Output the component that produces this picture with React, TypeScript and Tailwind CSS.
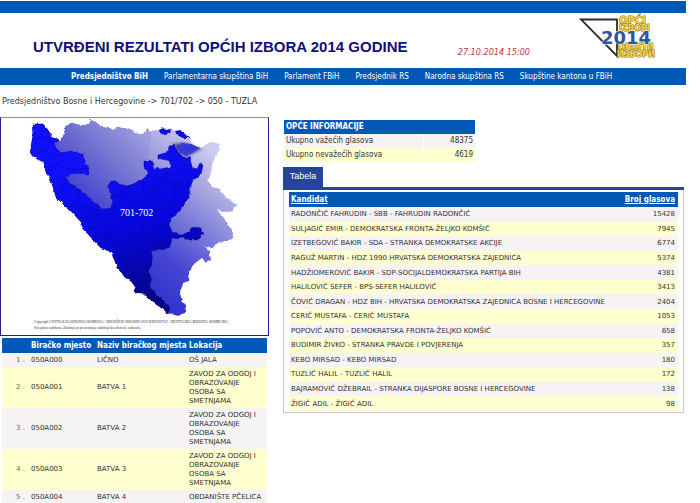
import React from "react";

const navItems = [
  "Predsjedništvo BiH",
  "Parlamentarna skupština BiH",
  "Parlament FBiH",
  "Predsjednik RS",
  "Narodna skupština RS",
  "Skupštine kantona u FBiH",
];

const candidates: [string, number][] = [
  ["RADONČIĆ FAHRUDIN - SBB - FAHRUDIN RADONČIĆ", 15428],
  ["SULJAGIĆ EMIR - DEMOKRATSKA FRONTA-ŽELJKO KOMŠIĆ", 7945],
  ["IZETBEGOVIĆ BAKIR - SDA - STRANKA DEMOKRATSKE AKCIJE", 6774],
  ["RAGUŽ MARTIN - HDZ 1990 HRVATSKA DEMOKRATSKA ZAJEDNICA", 5374],
  ["HADŽIOMEROVIĆ BAKIR - SDP-SOCIJALDEMOKRATSKA PARTIJA BIH", 4381],
  ["HALILOVIĆ SEFER - BPS-SEFER HALILOVIĆ", 3413],
  ["ČOVIĆ DRAGAN - HDZ BIH - HRVATSKA DEMOKRATSKA ZAJEDNICA BOSNE I HERCEGOVINE", 2404],
  ["CERIĆ MUSTAFA - CERIĆ MUSTAFA", 1053],
  ["POPOVIĆ ANTO - DEMOKRATSKA FRONTA-ŽELJKO KOMŠIĆ", 658],
  ["BUDIMIR ŽIVKO - STRANKA PRAVDE I POVJERENJA", 357],
  ["KEBO MIRSAD - KEBO MIRSAD", 180],
  ["TUZLIĆ HALIL - TUZLIĆ HALIL", 172],
  ["BAJRAMOVIĆ DŽEBRAIL - STRANKA DIJASPORE BOSNE I HERCEGOVINE", 138],
  ["ŽIGIĆ ADIL - ŽIGIĆ ADIL", 98],
];

const school = "ZAVOD ZA ODGOJ I OBRAZOVANJE OSOBA SA SMETNJAMA";
const stations: [string, string, string][] = [
  ["050A000", "LIČNO", "OŠ JALA"],
  ["050A001", "BATVA 1", school],
  ["050A002", "BATVA 2", school],
  ["050A003", "BATVA 3", school],
  ["050A004", "BATVA 4", "OBDANIŠTE PČELICA"],
];

function Logo() {
  return (
    <svg viewBox="579 14 82 48" className="h-12 w-[82px] shrink-0" role="img" aria-label="Opći izbori 2014">
      <path d="M582 20.5H618V57Z" fill="#fff" stroke="#2b2d2e" strokeWidth="1.8" />
      <g fontFamily="'DejaVu Sans', sans-serif" fontWeight="bold" strokeLinejoin="round">
        <g fill="#f0cf45" stroke="#8a701c" strokeWidth="1" paintOrder="stroke">
          <text x="620" y="25" fontSize="10">OPĆI</text>
          <text x="620" y="32" fontSize="8">IZBORI</text>
          <text x="619" y="51" fontSize="8">ОПШТИ</text>
          <text x="618" y="58" fontSize="8">ИЗБОРИ</text>
        </g>
        <text x="602" y="45" fontSize="18" fill="#31549b" stroke="#fff" strokeWidth="0.8" fontFamily="'DejaVu Sans', sans-serif" paintOrder="stroke">2014</text>
      </g>
    </svg>
  );
}

function CountryMap() {
  return (
    <svg viewBox="1 118 267 217" className="block w-full" role="img" aria-label="Karta izborne jedinice 701-702">
      <defs>
        <linearGradient id="pale" gradientUnits="userSpaceOnUse" x1="105" y1="300" x2="225" y2="160">
          <stop offset="0" stopColor="#2222cc" />
          <stop offset="0.4" stopColor="#4646d2" />
          <stop offset="0.75" stopColor="#9a9adf" />
          <stop offset="1" stopColor="#cdcdf0" />
        </linearGradient>
        <linearGradient id="north" gradientUnits="userSpaceOnUse" x1="85" y1="206" x2="160" y2="130">
          <stop offset="0" stopColor="#4040cc" />
          <stop offset="0.5" stopColor="#7676d2" />
          <stop offset="1" stopColor="#acace3" />
        </linearGradient>
        <linearGradient id="deep" gradientUnits="userSpaceOnUse" x1="90" y1="160" x2="140" y2="305">
          <stop offset="0" stopColor="#1010fa" />
          <stop offset="0.5" stopColor="#0707dc" />
          <stop offset="1" stopColor="#050582" />
        </linearGradient>
        <filter id="rough" colorInterpolationFilters="sRGB">
          <feTurbulence type="fractalNoise" baseFrequency="0.25" numOctaves="1" seed="4" />
          <feDisplacementMap in="SourceGraphic" scale="4" xChannelSelector="R" yChannelSelector="G" />
        </filter>
        <filter id="soft"><feGaussianBlur stdDeviation="1.6" /></filter>
        <clipPath id="region"><path d={deepPath} /></clipPath>
      </defs>
      <g filter="url(#rough)">
        <path d={countryPath} fill="url(#pale)" />
        <path d={northPath} fill="url(#north)" />
        <path d={deepPath} fill="url(#deep)" stroke="#0606a0" strokeWidth="0.5" />
        <path d="M158 129L162 127L166 130L170 129L171 132L165 135L160 133ZM175 131L180 130L185 134L190 138L183 138L177 135Z" fill="#0c0ce0" />
        <g clipPath="url(#region)" fill="none" stroke="#0404a8" strokeWidth="0.5">
          <path d="M31 142L40 137L51 140M35 154L46 151L54 158L63 153M46 170L58 164L70 170L88 168M52 178L66 178L62 190L54 194M66 182L79 192L76 204L66 207M76 204L92 212L103 209M78 219L95 215L108 222L106 234L92 239M106 234L118 232L124 218L116 209L112 196L124 194L132 183M124 194L136 200L144 190L156 192L162 180L152 170M136 200L138 214L124 218M138 214L152 212L160 203L156 192M160 203L173 207L184 204M162 180L176 184L191 184M176 184L173 207M170 153L178 164L192 166M162 180L170 168L178 164M152 212L156 225L170 228M118 232L130 240L142 231L138 214M142 231L156 225M130 240L128 254L112 258M128 254L140 262L152 258M142 231L152 240L170 246M140 262L137 276L126 276M137 276L151 279M86 230L96 226M97 244L108 238M144 190L142 178M100 222L97 212" />
        </g>
      </g>
      <path d="M173 144L179 153L186 157L197 151L202 149L193 146L184 143Z" fill="#222268" opacity="0.8" filter="url(#soft)" />
      <path d="M177 147L183 143L191 144L200 148L192 152L186 155L180 153Z" fill="#3838d8" filter="url(#rough)" />
      <text x="120" y="216" fontFamily="'Liberation Serif', serif" fontSize="10" fill="#fff">701-702</text>
      <g fontFamily="'Liberation Serif', serif" fontSize="3.5" fill="#333">
        <text x="34" y="323">Copyright CENTRALNA IZBORNA KOMISIJA / SREDIŠNJE IZBORNO POVJERENSTVO / ЦЕНТРАЛНА ИЗБОРНА КОМИСИЈА</text>
        <text x="34" y="329">Sva prava zadržana. Zabranjeno preuzimanje sadržaja bez dozvole izdavača.</text>
      </g>
    </svg>
  );
}

const countryPath =
  "M32 124L43 124L48 130L52 137L60 141L63 137L66 126L72 123L80 125L87 125L91 120L96 122L100 127L108 127L113 130L119 127L127 129L135 132L142 135L147 129L152 132L158 129L165 132L171 128L176 131L183 134L189 138L195 147L201 148L210 142L220 144L218 152L213 160L211 172L208 180L212 187L219 189L227 198L236 204L234 211L226 212L217 210L224 218L232 230L234 237L229 241L221 242L212 248L206 247L210 254L211 260L206 263L202 258L194 264L190 270L189 281L183 283L180 293L182 301L186 305L185 313L178 316L168 313L160 307L150 300L142 293L134 293L136 288L131 281L123 275L122 272L118 268L113 258L112 252L106 250L97 244L88 234L82 228L82 223L70 210L64 205L56 197L53 187L50 178L46 173L44 163L38 159L30 154L31 147L33 135Z";
const northPath =
  "M54 143L60 141L63 137L66 126L72 123L80 125L87 125L91 120L96 122L100 127L108 127L113 130L119 127L127 129L135 132L142 135L147 129L152 132L147 160L149 172L136 184L113 202L110 209L103 210L60 182Z";
const deepPath =
  "M32 124L43 124L48 130L52 137L59 140L54 143L56 148L61 153L71 151L83 155L86 164L89 168L88 175L80 173L70 174L66 177L68 182L78 189L88 197L95 203L103 209L110 208L113 202L111 195L108 187L109 181L116 181L119 184L127 186L136 183L144 178L148 172L144 166L144 161L150 160L153 163L152 168L160 169L171 167L169 161L158 158L158 155L166 153L170 145L174 144L176 150L183 157L190 157L192 168L197 169L200 163L203 165L201 174L192 181L190 192L187 200L183 206L178 213L170 220L169 225L172 232L180 235L190 232L191 228L199 227L203 234L197 240L190 240L183 237L172 238L170 248L160 249L151 251L153 260L148 272L152 279L149 286L155 293L164 302L170 308L168 313L160 307L150 300L142 293L134 293L136 288L131 281L123 275L122 272L118 268L113 258L112 252L106 250L97 244L88 234L82 228L82 223L70 210L64 205L56 197L53 187L50 178L46 173L44 163L38 159L30 154L31 147L33 135Z";

export default function App() {
  return (
    <div className="h-screen overflow-hidden bg-white pt-px pr-3.5 font-['DejaVu_Sans_Condensed','DejaVu_Sans',sans-serif] text-[8px] text-[#333]">
      <header>
        <div className="h-3 bg-[#0159b5]" />
        <div className="flex h-[55px] items-start pr-[26px] pl-[33px]">
          <h1 className="pt-6 font-['Liberation_Sans',Arial,sans-serif] text-[15px] leading-5 font-bold whitespace-nowrap text-[#10107a]">
            UTVRĐENI REZULTATI OPĆIH IZBORA 2014 GODINE
          </h1>
          <time className="ml-auto pt-[34px] pr-12 text-[9px] leading-[10px] whitespace-nowrap text-[#cc3340] italic">
            27.10.2014 15:00
          </time>
          <Logo />
        </div>
        <nav className="flex h-[17px] items-center gap-4 bg-[#0159b5] pl-[71px] text-[8px] whitespace-nowrap text-white">
          {navItems.map((item, i) => (
            <a key={item} href="#" className={i === 0 ? "font-bold" : ""}>{item}</a>
          ))}
        </nav>
      </header>

      <p className="pt-[11px] pb-2.5 pl-0.5 font-['DejaVu_Sans',sans-serif] text-[8px] leading-[11px]">
        Predsjedništvo Bosne i Hercegovine -&gt; 701/702 -&gt; 050 - TUZLA
      </p>

      <main className="flex items-start gap-3.5">
        <section className="w-[269px] shrink-0">
          <div className="border border-[#20208c] border-t-[#8c8cc8]">
            <CountryMap />
          </div>
          <div className="px-0.5 pt-0.5">
            <table className="w-full table-fixed border-collapse text-[7px] leading-[9px]">
              <colgroup>
                <col className="w-[27px]" />
                <col className="w-[66px]" />
                <col className="w-[92px]" />
                <col />
              </colgroup>
              <thead>
                <tr className="h-[15px] bg-[#0159b5] text-left text-[8px] whitespace-nowrap text-white">
                  <td />
                  <th className="pl-0.5">Biračko mjesto</th>
                  <th className="pl-0.5">Naziv biračkog mjesta</th>
                  <th className="pl-0.5">Lokacija</th>
                </tr>
              </thead>
              <tbody className="font-['DejaVu_Sans',sans-serif]">
                {stations.map(([code, name, place], i) => (
                  <tr key={code} className="h-3.5 bg-[#f5f3f3] even:bg-[#ffffcf]">
                    <td className="pr-1 text-right text-[#75656a]">{i + 1} .</td>
                    <td className="pl-0.5">{code}</td>
                    <td className="pl-0.5">{name}</td>
                    <td className="pt-[3px] pr-1 pb-0.5 pl-0.5">{place}</td>
                  </tr>
                ))}
              </tbody>
            </table>
          </div>
        </section>

        <section className="min-w-0 flex-1 pt-[3px] pr-0.5">
          <table className="ml-px w-[191px] border-collapse text-[8px] leading-[10px]">
            <thead>
              <tr className="h-3.5 bg-[#0159b5] text-left text-white">
                <th colSpan={2} className="pl-0.5">OPĆE INFORMACIJE</th>
              </tr>
            </thead>
            <tbody>
              <tr className="h-3.5 bg-[#f5f3f3]">
                <td className="w-[139px] border-r border-white pl-0.5">Ukupno važećih glasova</td>
                <td className="pr-0.5 text-right">48375</td>
              </tr>
              <tr className="h-3.5 bg-[#ffffcf]">
                <td className="border-r border-white pl-0.5">Ukupno nevažećih glasova</td>
                <td className="pr-0.5 text-right">4619</td>
              </tr>
            </tbody>
          </table>
          <div className="mt-[5px] border-b-[3px] border-[#25459a]">
            <button className="block h-5 w-10 bg-[#25459a] font-['Liberation_Sans',Arial,sans-serif] text-[9px] text-white">
              Tabela
            </button>
          </div>
          <div className="border border-t-0 border-[#c4c4d6] px-[5px] pt-0.5 pb-px">
            <table className="h-[219px] w-full border-collapse text-[7px] leading-[10px] whitespace-nowrap">
              <thead>
                <tr className="h-[15px] bg-[#0159b5] text-[8px] text-white underline">
                  <th className="pl-0.5 text-left">Kandidat</th>
                  <th className="pr-[3px] text-right">Broj glasova</th>
                </tr>
              </thead>
              <tbody className="font-['DejaVu_Sans',sans-serif]">
                {candidates.map(([name, votes]) => (
                  <tr key={name} className="bg-[#f5f3f3] even:bg-[#ffffcf]">
                    <td className="pl-0.5">{name}</td>
                    <td className="pr-[3px] text-right">{votes}</td>
                  </tr>
                ))}
              </tbody>
            </table>
          </div>
        </section>
      </main>
    </div>
  );
}
